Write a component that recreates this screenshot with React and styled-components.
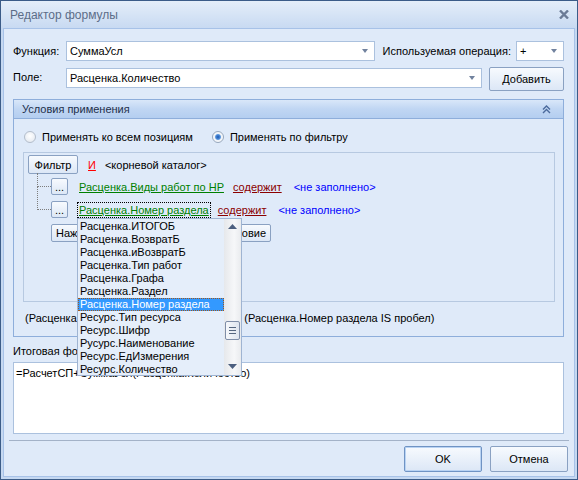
import React from 'react'
import styled, { createGlobalStyle, css } from 'styled-components'

const GlobalStyle = createGlobalStyle`
  html, body {
    margin: 0;
    padding: 0;
  }
  body {
    font-family: "Liberation Sans", Arial, sans-serif;
    font-size: 11px;
    color: #000;
  }
`

const fields = [
    'Расценка.ИТОГОБ',
    'Расценка.ВозвратБ',
    'Расценка.иВозвратБ',
    'Расценка.Тип работ',
    'Расценка.Графа',
    'Расценка.Раздел',
    'Расценка.Номер раздела',
    'Ресурс.Тип ресурса',
    'Ресурс.Шифр',
    'Русурс.Наименование',
    'Ресурс.ЕдИзмерения',
    'Ресурс.Количество',
]

const CloseIcon = () => (
    <svg width="10" height="9" viewBox="0 0 10 9">
        <path d="M1 0.5 L9 8.5 M9 0.5 L1 8.5" stroke="#6b7b96" strokeWidth="2.4" />
    </svg>
)

const CollapseIcon = () => (
    <svg width="9" height="9" viewBox="0 0 9 9">
        <path d="M1 4.5 L4.5 1 L8 4.5 M1 8 L4.5 4.5 L8 8" stroke="#4b6a9c" strokeWidth="1.4" fill="none" />
    </svg>
)

const Arrow = ({ up }) => (
    <svg width="9" height="5" viewBox="0 0 9 5">
        <path d={up ? 'M0 5 L4.5 0 L9 5 Z' : 'M0 0 L4.5 5 L9 0 Z'} fill="#4c5f7f" />
    </svg>
)

const Grip = () => (
    <svg width="7" height="7" viewBox="0 0 7 7">
        <path d="M0 0.5 H7 M0 3.5 H7 M0 6.5 H7" stroke="#55667f" strokeWidth="1" />
    </svg>
)

const FormulaEditor = () => {
    return (
        <Window>
            <TitleBar>
                <span>Редактор формулы</span>
                <CloseIcon />
            </TitleBar>
            <Client>
                <FormRow>
                    <Label>Функция:</Label>
                    <Combo>
                        <ComboText>СуммаУсл</ComboText>
                        <ComboArrow />
                    </Combo>
                    <OpLabel>Используемая операция:</OpLabel>
                    <Combo $width={48}>
                        <ComboText>+</ComboText>
                        <ComboArrow />
                    </Combo>
                </FormRow>
                <FormRow $gap={6}>
                    <Label>Поле:</Label>
                    <Combo $offset={1}>
                        <ComboText>Расценка.Количество</ComboText>
                        <ComboArrow />
                    </Combo>
                    <Button $width={75} $height={24} $left={7}>Добавить</Button>
                </FormRow>

                <Panel>
                    <PanelHeader>
                        <span>Условия применения</span>
                        <CollapseIcon />
                    </PanelHeader>
                    <PanelBody>
                        <RadioRow>
                            <RadioOption>
                                <Radio />
                                Применять ко всем позициям
                            </RadioOption>
                            <RadioOption>
                                <Radio $checked />
                                Применять по фильтру
                            </RadioOption>
                        </RadioRow>

                        <FilterBox>
                            <FilterHead>
                                <Button $width={50} $height={19}>Фильтр</Button>
                                <Token $color="#ff0000" $underline>И</Token>
                                <Token $color="#000">&lt;корневой каталог&gt;</Token>
                            </FilterHead>

                            <Condition $first>
                                <Button $width={17} $height={17}>...</Button>
                                <Field>
                                    <Token $color="#008000" $underline>Расценка.Виды работ по НР</Token>
                                </Field>
                                <Token $color="#8b0000" $underline>содержит</Token>
                                <Token $color="#0000ff">&lt;не заполнено&gt;</Token>
                            </Condition>

                            <Condition>
                                <Button $width={17} $height={17}>...</Button>
                                <Field $focused>
                                    <Token $color="#008000" $underline>Расценка.Номер раздела</Token>
                                    <DropList>
                                        <ListItems>
                                            {fields.map((name) => (
                                                <ListItem key={name} $selected={name === 'Расценка.Номер раздела'}>
                                                    {name}
                                                </ListItem>
                                            ))}
                                        </ListItems>
                                        <ScrollBar>
                                            <ScrollButton><Arrow up /></ScrollButton>
                                            <ScrollThumb><Grip /></ScrollThumb>
                                            <ScrollButton $bottom><Arrow /></ScrollButton>
                                        </ScrollBar>
                                    </DropList>
                                </Field>
                                <Token $color="#8b0000" $underline>содержит</Token>
                                <Token $color="#0000ff">&lt;не заполнено&gt;</Token>
                            </Condition>

                            <AddRow>
                                <Button $height={18}>Нажмите здесь, чтобы добавить условие</Button>
                            </AddRow>
                        </FilterBox>

                        <Summary>
                            (Расценка.Виды работ по НР IS пробел) И (Расценка.Номер раздела IS пробел)
                        </Summary>
                    </PanelBody>
                </Panel>

                <FormulaLabel>Итоговая формула:</FormulaLabel>
                <TextBox>=РасчетСП+СуммаУсл(Расценка.Количество)</TextBox>

                <Separator />
                <ButtonBar>
                    <Button $width={78} $height={26} $default>OK</Button>
                    <Button $width={78} $height={26}>Отмена</Button>
                </ButtonBar>
            </Client>
        </Window>
    )
}

export default function App() {
    return (
        <>
            <GlobalStyle />
            <FormulaEditor />
        </>
    )
}


const Window = styled.div`
  width: 578px;
  height: 480px;
  box-sizing: border-box;
  border: 1px solid #3b5c88;
  background: #c5d8f1;
  display: flex;
  flex-direction: column;
`

const TitleBar = styled.div`
  height: 27px;
  flex: none;
  display: flex;
  align-items: center;
  justify-content: space-between;
  padding: 0 8px 0 9px;
  background: linear-gradient(#e4eef9, #c8daf2);
  color: #5c6d88;
  font-size: 12px;
`

const Client = styled.div`
  flex: 1;
  margin: 0 2px 2px;
  border: 1px solid #a7c2e8;
  background: #dfeaf9;
  display: flex;
  flex-direction: column;
  padding: 12px 10px 0 9px;
`

const FormRow = styled.div`
  display: flex;
  align-items: flex-start;
  margin-top: ${({ $gap }) => $gap || 0}px;
`

const Label = styled.span`
  width: 53px;
  flex: none;
  line-height: 20px;
`

const OpLabel = styled.span`
  line-height: 20px;
  margin: 0 5px 0 8px;
  white-space: nowrap;
`

const Combo = styled.div`
  box-sizing: border-box;
  height: 20px;
  ${({ $width }) => ($width ? `width: ${$width}px; flex: none;` : 'flex: 1;')}
  margin-top: ${({ $offset }) => $offset || 0}px;
  background: #fff;
  border: 1px solid #abc1de;
  display: flex;
  align-items: center;
  padding: 0 6px 0 3px;
`

const ComboText = styled.span`
  flex: 1;
  white-space: nowrap;
`

const ComboArrow = styled.span`
  width: 0;
  height: 0;
  border-left: 3.5px solid transparent;
  border-right: 3.5px solid transparent;
  border-top: 4px solid #71829e;
`

const Button = styled.button`
  box-sizing: border-box;
  flex: none;
  font: inherit;
  color: #000;
  height: ${({ $height }) => $height}px;
  ${({ $width }) => $width && `width: ${$width}px;`}
  margin-left: ${({ $left }) => $left || 0}px;
  padding: 0 4px;
  border: 1px solid #8aa1c2;
  border-radius: 2px;
  background: linear-gradient(#f7fafe, #dce7f6);
  display: flex;
  align-items: center;
  justify-content: center;
  white-space: nowrap;
  ${({ $default }) => $default && css`
    border-color: #6f93c4;
    box-shadow: inset 0 0 0 1px #b9d3f3;
  `}
`

const Panel = styled.div`
  margin-top: 8px;
  border: 1px solid #8eaedb;
`

const PanelHeader = styled.div`
  height: 19px;
  box-sizing: border-box;
  border-bottom: 1px solid #8eaedb;
  background: linear-gradient(#d9e7f9, #c0d6f3 50%, #b4cef0);
  display: flex;
  align-items: center;
  justify-content: space-between;
  padding: 0 12px 0 8px;
  color: #1e2f4a;
`

const PanelBody = styled.div`
  padding: 10px 8px 11px 9px;
`

const RadioRow = styled.div`
  height: 16px;
  display: flex;
  align-items: center;
  gap: 19px;
  padding-left: 1px;
`

const RadioOption = styled.label`
  display: flex;
  align-items: center;
  gap: 6px;
`

const Radio = styled.span`
  width: 12px;
  height: 12px;
  box-sizing: border-box;
  border-radius: 50%;
  border: 1px solid #b3bdcb;
  background: radial-gradient(circle at 50% 40%, #ffffff, #dfe5ee);
  ${({ $checked }) => $checked && css`
    border-color: #97a7bd;
    background: radial-gradient(circle, #1d56ad 0, #4f8fdc 2.4px, #eef2f7 3.4px, #f7f9fb 5px);
  `}
`

const FilterBox = styled.div`
  margin-top: 7px;
  height: 150px;
  box-sizing: border-box;
  border: 1px solid #b7c9e1;
  padding: 2px 4px 0 4px;
`

const FilterHead = styled.div`
  display: flex;
  align-items: center;
  gap: 10px;
  height: 19px;

  & > span:last-child {
    margin-left: -1px;
  }
`

const Token = styled.span`
  color: ${({ $color }) => $color};
  text-decoration: ${({ $underline }) => ($underline ? 'underline' : 'none')};
  white-space: nowrap;
`

const Condition = styled.div`
  position: relative;
  display: flex;
  align-items: center;
  height: 17px;
  margin: ${({ $first }) => ($first ? 4 : 6)}px 0 0 23px;

  & > ${Token} {
    margin-left: 12px;
  }

  &::before {
    content: "";
    position: absolute;
    left: -14px;
    top: ${({ $first }) => ($first ? -5 : -14)}px;
    width: 13px;
    height: ${({ $first }) => ($first ? 13 : 22)}px;
    border-left: 1px dotted #7d7d7d;
    border-bottom: 1px dotted #7d7d7d;
  }
`

const Field = styled.span`
  position: relative;
  margin-left: 9px;
  padding: 1px;
  border: 1px dotted ${({ $focused }) => ($focused ? '#000' : 'transparent')};
  & + ${Token} {
    margin-left: 7px;
  }
`

const DropList = styled.div`
  position: absolute;
  left: -1px;
  top: calc(100% + 1px);
  z-index: 5;
  width: 165px;
  height: 158px;
  box-sizing: border-box;
  border: 1px solid #9fb4d2;
  background: #e5eefa;
  display: flex;
  color: #000;
  text-decoration: none;
`

const ListItems = styled.div`
  flex: 1;
  display: flex;
  flex-direction: column;
  padding-top: 1px;
  overflow: hidden;
`

const ListItem = styled.div`
  height: 13px;
  flex: none;
  line-height: 13px;
  padding-left: 2px;
  white-space: nowrap;
  overflow: hidden;
  box-sizing: border-box;
  ${({ $selected }) => $selected && css`
    background: #3399ff;
    color: #fff;
    outline: 1px dotted #a0581c;
    outline-offset: -1px;
  `}
`

const ScrollBar = styled.div`
  width: 17px;
  flex: none;
  display: flex;
  flex-direction: column;
  background: linear-gradient(90deg, #e6e8eb, #f6f7f9 60%, #e9ebee);
`

const ScrollButton = styled.div`
  height: 16px;
  display: flex;
  align-items: center;
  justify-content: center;
  margin-top: ${({ $bottom }) => ($bottom ? 'auto' : '0')};
`

const ScrollThumb = styled.div`
  margin: 86px 1px 0;
  height: 19px;
  box-sizing: border-box;
  border: 1px solid #7f8ea8;
  border-radius: 2px;
  background: linear-gradient(90deg, #f6f8fb, #dfe5ee);
  display: flex;
  align-items: center;
  justify-content: center;
`

const AddRow = styled.div`
  margin: 6px 0 0 23px;
  display: flex;
`

const Summary = styled.div`
  margin-top: 9px;
  padding-left: 2px;
  line-height: 14px;
  white-space: nowrap;
`

const FormulaLabel = styled.div`
  margin-top: 7px;
  line-height: 14px;
`

const TextBox = styled.div`
  margin-top: 4px;
  height: 72px;
  box-sizing: border-box;
  background: #fff;
  border: 1px solid #abc1de;
  padding: 3px 2px;
  line-height: 14px;
`

const Separator = styled.div`
  margin: 6px -5px 0 -4px;
  border-top: 1px solid #a3b2c8;
`

const ButtonBar = styled.div`
  margin: 5px -4px 0 0;
  display: flex;
  justify-content: flex-end;
  gap: 8px;
`
